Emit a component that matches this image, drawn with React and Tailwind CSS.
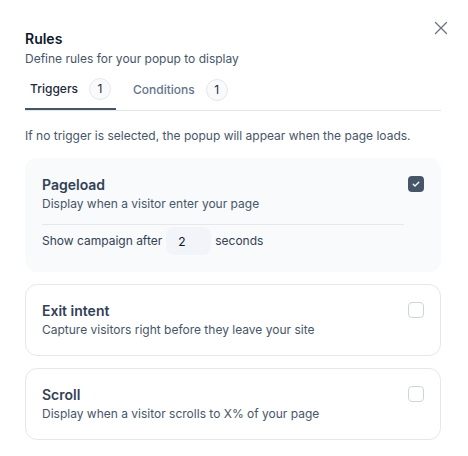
import React from "react";

const Check = ({ checked }) =>
  checked ? (
    <div className="w-4 h-4 shrink-0 rounded-[4px] bg-[#475569] flex items-center justify-center">
      <svg width="10" height="10" viewBox="0 0 10 10" fill="none">
        <path d="M2.2 5.2l1.8 1.8 3.8-3.8" stroke="white" strokeWidth="1.3" strokeLinecap="round" strokeLinejoin="round" />
      </svg>
    </div>
  ) : (
    <div className="w-4 h-4 shrink-0 rounded-[4px] border border-[#cbd5e1] bg-white" />
  );

const Badge = ({ n }) => (
  <span className="w-[22px] h-[22px] rounded-full border border-[#e5e7eb] bg-[#f9fafb] flex items-center justify-center text-[12px] text-[#1e293b]">
    {n}
  </span>
);

const TriggerCard = ({ title, desc, checked, children, active }) => (
  <div
    className={`rounded-xl border p-4 flex gap-1 ${
      active ? "bg-[#f8fafc] border-[#f8fafc]" : "bg-white border-[#e5e7eb]"
    }`}
  >
    <div className="flex-1">
      <div className="text-[14px] leading-5 font-semibold text-[#334155]">{title}</div>
      <div className="text-[12px] leading-[18px] text-[#475569]">{desc}</div>
      {children}
    </div>
    <div className="pt-[1px]">
      <Check checked={checked} />
    </div>
  </div>
);

export default function App() {
  return (
    <div className="w-[468px] h-[456px] bg-white font-['Inter',sans-serif] px-[25px] pt-[29px] relative">
      <button className="absolute right-[20px] top-[21px] text-[#6b7280]">
        <svg width="14" height="14" viewBox="0 0 14 14" fill="none">
          <path d="M1.5 1.5l11 11M12.5 1.5l-11 11" stroke="currentColor" strokeWidth="1.3" strokeLinecap="round" />
        </svg>
      </button>
      <div className="w-[416px]">
        <h2 className="text-[14px] leading-5 font-semibold text-[#0f172a]">Rules</h2>
        <p className="text-[12px] leading-5 text-[#475569]">Define rules for your popup to display</p>

        <div className="flex gap-3 border-b border-[#e5e7eb]">
          <div className="flex items-center gap-[11px] px-[5px] h-[41px] border-b-2 border-[#475569] -mb-px">
            <span className="text-[12px] font-medium text-[#1e293b]">Triggers</span>
            <Badge n="1" />
          </div>
          <div className="flex items-center gap-[11px] px-[5px] h-[41px]">
            <span className="text-[12px] font-medium text-[#64748b]">Conditions</span>
            <Badge n="1" />
          </div>
        </div>

        <p className="mt-[15px] mb-[12px] text-[12px] leading-5 text-[#475569]">
          If no trigger is selected, the popup will appear when the page loads.
        </p>

        <div className="flex flex-col gap-3">
          <TriggerCard title="Pageload" desc="Display when a visitor enter your page" checked active>
            <div className="mt-[11px] border-t border-[#e5e7eb] pt-[2px] flex items-center gap-1 text-[12px] text-[#334155]">
              <span>Show campaign after</span>
              <input
                readOnly
                value="2"
                className="w-[45px] h-[28px] rounded-lg bg-[#f1f5f9] px-3 text-[12px] text-[#0f172a] outline-none"
              />
              <span>seconds</span>
            </div>
          </TriggerCard>
          <TriggerCard title="Exit intent" desc="Capture visitors right before they leave your site" />
          <TriggerCard title="Scroll" desc="Display when a visitor scrolls to X% of your page" />
        </div>
      </div>
    </div>
  );
}
